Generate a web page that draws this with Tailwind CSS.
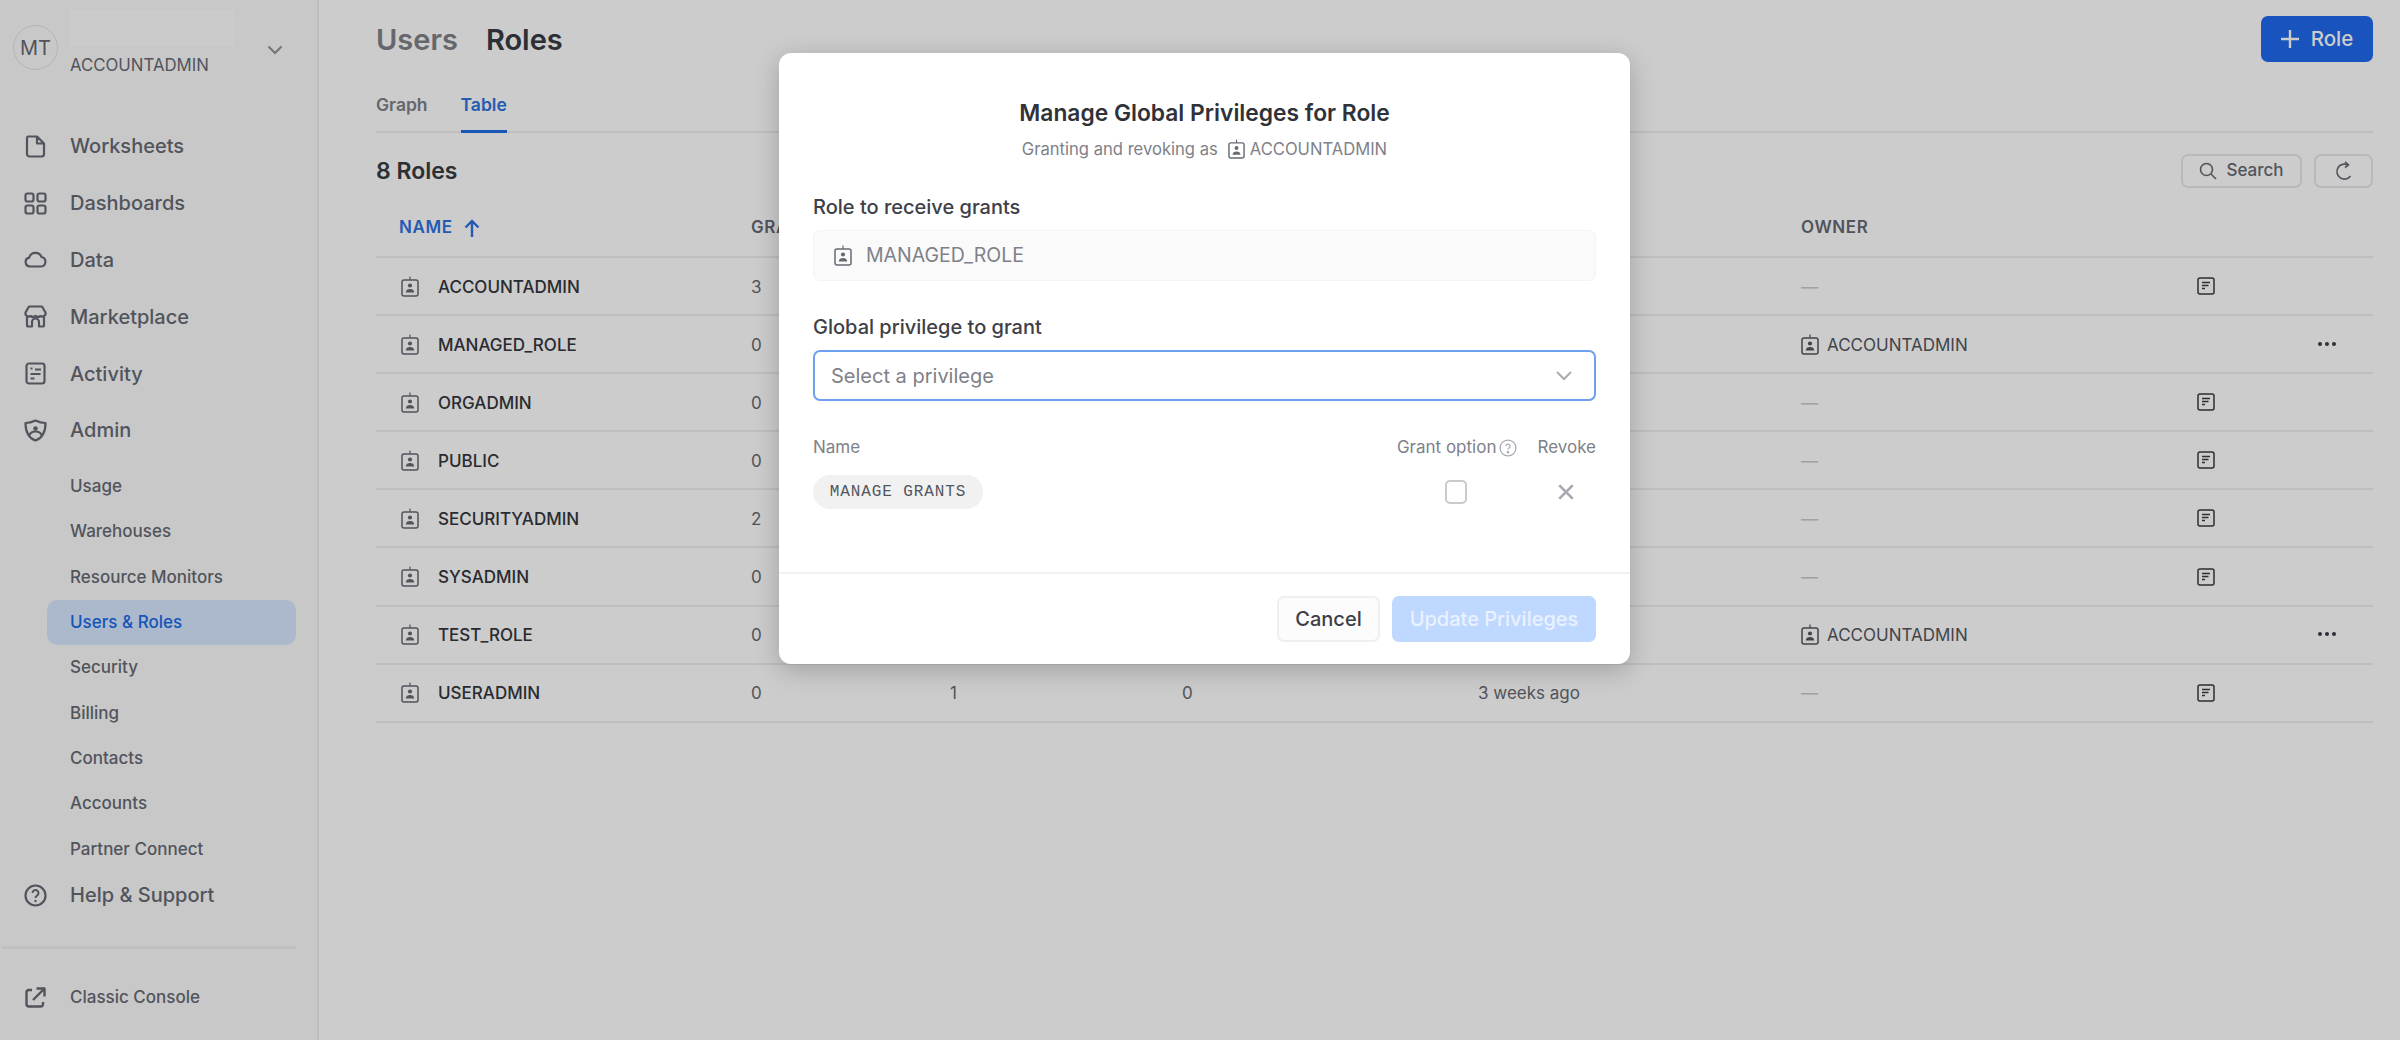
<!DOCTYPE html>
<html lang="en">
<head>
    <meta charset="UTF-8">
    <title>Users &amp; Roles</title>
    <script src="https://cdn.jsdelivr.net/npm/@tailwindcss/browser@4"></script>
</head>
<body class="font-['Inter',sans-serif] antialiased text-[#1e252f]">
    <svg class="hidden">
        <symbol id="role" viewBox="0 0 18 21" fill="none">
            <rect x="1" y="4" width="16" height="16" rx="2" stroke="currentColor" stroke-width="1.5"/>
            <path d="M9 0.5V4" stroke="currentColor" stroke-width="1.2"/>
            <circle cx="9" cy="9.500" r="2.100" fill="currentColor"/>
            <path d="M4.800 16.500c0-2.300 1.900-3.400 4.200-3.400s4.200 1.100 4.200 3.400z" fill="currentColor"/>
        </symbol>
        <symbol id="note" viewBox="0 0 18 18" fill="none">
            <rect x="1" y="1" width="16" height="16" rx="2" stroke="currentColor" stroke-width="1.5"/>
            <path d="M5 5.500h8M5 8.500h6.500M5 11.500h3" stroke="currentColor" stroke-width="1.6"/>
        </symbol>
    </svg>

    <div class="relative w-[2400px] h-[1040px] overflow-hidden bg-white flex">
        <!-- sidebar -->
        <aside class="w-[319px] h-full shrink-0 bg-[#fbfbfb] border-r-2 border-[#eceef0] text-[#666a73] flex flex-col">
            <div class="h-[118px] pl-[13px] flex items-start">
                <div class="mt-[25px] w-[45px] h-[45px] shrink-0 rounded-full border border-[#dfe1e5] flex items-center justify-center text-[20px] text-[#666a73]">MT</div>
                <div class="ml-[12px] w-[165px] shrink-0">
                    <div class="mt-[10px] h-[36px] w-[165px] bg-[#fefefe]"></div>
                    <div class="mt-[9px] text-[16.800px] leading-5 whitespace-nowrap">ACCOUNTADMIN</div>
                </div>
                <svg class="ml-[32px] mt-[44px] w-[16px] h-[12px] shrink-0" viewBox="0 0 16 12" fill="none" stroke="#8d9097" stroke-width="2"><path d="M1.500 2.500 8 9l6.500-6.500"/></svg>
            </div>
            <a class="h-[56.800px] flex items-center pl-[24px] text-[20px] font-medium gap-[23px]">
                <svg class="w-[23px] h-[23px]" viewBox="0 0 23 23" fill="none" stroke="currentColor" stroke-width="2.200" stroke-linejoin="round"><path d="M4 1.500h9l7 7V19a2.500 2.500 0 0 1-2.500 2.500h-12A2.500 2.500 0 0 1 3 19V3a1.500 1.500 0 0 1 1-1.500zM13 1.500V8.500h7"/></svg>Worksheets</a>
            <a class="h-[56.800px] flex items-center pl-[24px] text-[20px] font-medium gap-[23px]">
                <svg class="w-[23px] h-[23px]" viewBox="0 0 23 23" fill="none" stroke="currentColor" stroke-width="2.200"><rect x="1.500" y="1.500" width="8" height="8" rx="2"/><rect x="13.500" y="1.500" width="8" height="8" rx="2"/><rect x="1.500" y="13.500" width="8" height="8" rx="2"/><rect x="13.500" y="13.500" width="8" height="8" rx="2"/></svg>Dashboards</a>
            <a class="h-[56.800px] flex items-center pl-[24px] text-[20px] font-medium gap-[23px]">
                <svg class="w-[23px] h-[23px]" viewBox="0 0 23 23" fill="none" stroke="currentColor" stroke-width="2.200" stroke-linejoin="round"><path d="M6 18.500a4.500 4.500 0 0 1-.8-8.900A6.500 6.500 0 0 1 17.500 9a4.800 4.800 0 0 1-.5 9.500z"/></svg>Data</a>
            <a class="h-[56.800px] flex items-center pl-[24px] text-[20px] font-medium gap-[23px]">
                <svg class="w-[23px] h-[23px]" viewBox="0 0 23 23" fill="none" stroke="currentColor" stroke-width="2.200" stroke-linejoin="round"><path d="M3 11.500V20a1.500 1.500 0 0 0 1.500 1.500H8V17a3.500 3.500 0 0 1 7 0v4.500h3.500A1.500 1.500 0 0 0 20 20v-8.500"/><path d="M5 1.500h13l3.500 6a3.300 3.300 0 0 1-5 3.500 4.200 4.200 0 0 1-5 0 4.200 4.200 0 0 1-5 0 3.300 3.300 0 0 1-5-3.500z"/></svg>Marketplace</a>
            <a class="h-[56.800px] flex items-center pl-[24px] text-[20px] font-medium gap-[23px]">
                <svg class="w-[23px] h-[23px]" viewBox="0 0 23 23" fill="none" stroke="currentColor" stroke-width="2.200"><rect x="2.500" y="1.500" width="18" height="20" rx="2.500"/><path d="M6.500 6.500h2M11 7.500h6M6.500 12h10M6.500 16.500h4" stroke-width="2"/></svg>Activity</a>
            <a class="h-[56.800px] flex items-center pl-[24px] text-[20px] font-medium gap-[23px]">
                <svg class="w-[23px] h-[23px]" viewBox="0 0 23 23" fill="none" stroke="currentColor" stroke-width="2.200" stroke-linejoin="round"><path d="M11.500 1.500c3 1.500 6 2.500 10 2.500 0 8-3 15-10 17.500C4.500 19 1.500 12 1.500 4c4 0 7-1 10-2.500z"/><circle cx="11.500" cy="9.500" r="2.200" fill="currentColor" stroke="none"/><path d="M5.500 16c1-2.500 3-3.500 6-3.500s5 1 6 3.500"/></svg>Admin</a>
            <div class="mt-[5px] flex flex-col text-[17px] font-medium">
                <a class="h-[45.400px] flex items-center pl-[70px]">Usage</a>
                <a class="h-[45.400px] flex items-center pl-[70px]">Warehouses</a>
                <a class="h-[45.400px] flex items-center pl-[70px]">Resource Monitors</a>
                <a class="h-[45.400px] ml-[47px] mr-[21px] flex items-center pl-[23px] rounded-[10px] bg-[#d7e7ff] text-[#1a6ce7]">Users &amp; Roles</a>
                <a class="h-[45.400px] flex items-center pl-[70px]">Security</a>
                <a class="h-[45.400px] flex items-center pl-[70px]">Billing</a>
                <a class="h-[45.400px] flex items-center pl-[70px]">Contacts</a>
                <a class="h-[45.400px] flex items-center pl-[70px]">Accounts</a>
                <a class="h-[45.400px] flex items-center pl-[70px]">Partner Connect</a>
            </div>
            <a class="h-[46px] flex items-center pl-[24px] text-[20px] font-medium gap-[23px]">
                <svg class="w-[23px] h-[23px]" viewBox="0 0 23 23" fill="none" stroke="currentColor" stroke-width="2.200"><circle cx="11.500" cy="11.500" r="10"/><path d="M8.500 9a3 3 0 1 1 4.500 2.600c-1 .6-1.500 1.200-1.500 2.400" stroke-width="2"/><circle cx="11.500" cy="17" r="1.200" fill="currentColor" stroke="none"/></svg>Help &amp; Support</a>
            <div class="mt-[28px] ml-[2px] mr-[21px] h-[3px] bg-[#eff0f2]"></div>
            <a class="mt-[25px] h-[46px] flex items-center pl-[24px] text-[17px] font-medium gap-[23px]">
                <svg class="w-[23px] h-[23px]" viewBox="0 0 23 23" fill="none" stroke="currentColor" stroke-width="2.400" stroke-linejoin="round"><path d="M8 4H5a2.500 2.500 0 0 0-2.500 2.500V18A2.500 2.500 0 0 0 5 20.500h11.500A2.500 2.500 0 0 0 19 18v-2"/><path d="M9 14 20 3M12.500 2.500H20.500V10.500"/></svg>Classic Console</a>
        </aside>

        <!-- main -->
        <main class="flex-1 pl-[57px] pr-[27px] flex flex-col">
            <div class="h-[78px] flex items-start justify-between">
                <div class="mt-[22px] flex gap-[28px] text-[29px] leading-9 font-semibold">
                    <span class="text-[#7e8188]">Users</span>
                    <span class="text-[#383b42]">Roles</span>
                </div>
                <button class="mt-[16px] w-[112px] h-[46px] rounded-[7px] bg-[#1f68ee] text-white text-[20.500px] font-medium flex items-center justify-center gap-[12px]">
                    <svg class="w-[18px] h-[18px]" viewBox="0 0 18 18" stroke="currentColor" stroke-width="2.400"><path d="M9 0v18M0 9h18"/></svg>Role
                </button>
            </div>
            <div class="h-[55px] border-b-2 border-[#eceef0] flex items-start gap-[33px] text-[17.500px] font-semibold">
                <a class="mt-[14px] text-[#7e8188]">Graph</a>
                <a class="h-[55px] pt-[14px] border-b-[3px] border-[#1f6ce6] text-[#2c72e0]">Table</a>
            </div>
            <div class="h-[68px] flex items-center justify-between">
                <h2 class="text-[23px] font-semibold text-[#383b42] mt-[9px]">8 Roles</h2>
                <div class="flex gap-[12px] mt-[7px] text-[#666a73]">
                    <button class="w-[121px] h-[34px] border-2 border-[#e6e8eb] rounded-[7px] flex items-center justify-center gap-[9px] text-[17px] font-medium">
                        <svg class="w-[18px] h-[18px]" viewBox="0 0 18 18" fill="none" stroke="currentColor" stroke-width="1.600"><circle cx="7.500" cy="7.500" r="6"/><path d="m12 12 5 5"/></svg>Search
                    </button>
                    <button class="w-[59px] h-[34px] border-2 border-[#e6e8eb] rounded-[7px] flex items-center justify-center">
                        <svg class="w-[18px] h-[20px]" viewBox="0 0 18 20" fill="none" stroke="currentColor" stroke-width="1.600"><path d="M15.500 15a7.500 7.500 0 1 1-2.500-11"/><path d="M10 .8 13.500 4 10 6.500"/></svg>
                    </button>
                </div>
            </div>

            <!-- table -->
            <div class="flex flex-col text-[17px] text-[#666a73]">
                <div class="grid grid-cols-[375px_199px_232px_296px_323px_396px_120px_1fr] h-[57px] items-center border-b-2 border-[#eceef0] text-[17px] font-semibold tracking-[0.6px] pb-[2px]">
                    <span class="pl-[23px] text-[#2c72e0] flex items-center gap-[11px]">NAME <svg class="w-[16px] h-[18px]" viewBox="0 0 16 18" fill="none" stroke="currentColor" stroke-width="2.400"><path d="M8 18V2M1.500 8.500 8 2l6.500 6.500"/></svg></span>
                    <span>GRANTED</span><span></span><span></span><span></span><span>OWNER</span>
                </div>

                <div class="grid grid-cols-[375px_199px_232px_296px_323px_396px_120px_1fr] h-[58.100px] pt-[3px] items-center border-b-2 border-[#eceef0]">
                    <span class="pl-[25px] flex items-center gap-[19px] font-medium text-[#33363d]"><svg class="-mt-[3px] w-[18px] h-[21px] text-[#666a73]"><use href="#role"/></svg>ACCOUNTADMIN</span>
                    <span>3</span><span></span><span></span><span></span><span class="text-[#c8cacd]">—</span>
                    <svg class="-mt-[3px] w-[18px] h-[18px] text-[#383b42]"><use href="#note"/></svg>
                </div>
                <div class="grid grid-cols-[375px_199px_232px_296px_323px_396px_120px_1fr] h-[58.100px] pt-[3px] items-center border-b-2 border-[#eceef0]">
                    <span class="pl-[25px] flex items-center gap-[19px] font-medium text-[#33363d]"><svg class="-mt-[3px] w-[18px] h-[21px] text-[#666a73]"><use href="#role"/></svg>MANAGED_ROLE</span>
                    <span>0</span><span></span><span></span><span></span>
                    <span class="flex items-center gap-[8px] text-[#53565d]"><svg class="-mt-[3px] w-[18px] h-[21px] text-[#53565d]"><use href="#role"/></svg>ACCOUNTADMIN</span>
                    <span></span>
                    <svg class="w-[20px] h-[6px] text-[#383b42] -mt-[4px]" viewBox="0 0 20 6" fill="currentColor"><circle cx="3" cy="3" r="2"/><circle cx="10" cy="3" r="2"/><circle cx="17" cy="3" r="2"/></svg>
                </div>
                <div class="grid grid-cols-[375px_199px_232px_296px_323px_396px_120px_1fr] h-[58.100px] pt-[3px] items-center border-b-2 border-[#eceef0]">
                    <span class="pl-[25px] flex items-center gap-[19px] font-medium text-[#33363d]"><svg class="-mt-[3px] w-[18px] h-[21px] text-[#666a73]"><use href="#role"/></svg>ORGADMIN</span>
                    <span>0</span><span></span><span></span><span></span><span class="text-[#c8cacd]">—</span>
                    <svg class="-mt-[3px] w-[18px] h-[18px] text-[#383b42]"><use href="#note"/></svg>
                </div>
                <div class="grid grid-cols-[375px_199px_232px_296px_323px_396px_120px_1fr] h-[58.100px] pt-[3px] items-center border-b-2 border-[#eceef0]">
                    <span class="pl-[25px] flex items-center gap-[19px] font-medium text-[#33363d]"><svg class="-mt-[3px] w-[18px] h-[21px] text-[#666a73]"><use href="#role"/></svg>PUBLIC</span>
                    <span>0</span><span></span><span></span><span></span><span class="text-[#c8cacd]">—</span>
                    <svg class="-mt-[3px] w-[18px] h-[18px] text-[#383b42]"><use href="#note"/></svg>
                </div>
                <div class="grid grid-cols-[375px_199px_232px_296px_323px_396px_120px_1fr] h-[58.100px] pt-[3px] items-center border-b-2 border-[#eceef0]">
                    <span class="pl-[25px] flex items-center gap-[19px] font-medium text-[#33363d]"><svg class="-mt-[3px] w-[18px] h-[21px] text-[#666a73]"><use href="#role"/></svg>SECURITYADMIN</span>
                    <span>2</span><span></span><span></span><span></span><span class="text-[#c8cacd]">—</span>
                    <svg class="-mt-[3px] w-[18px] h-[18px] text-[#383b42]"><use href="#note"/></svg>
                </div>
                <div class="grid grid-cols-[375px_199px_232px_296px_323px_396px_120px_1fr] h-[58.100px] pt-[3px] items-center border-b-2 border-[#eceef0]">
                    <span class="pl-[25px] flex items-center gap-[19px] font-medium text-[#33363d]"><svg class="-mt-[3px] w-[18px] h-[21px] text-[#666a73]"><use href="#role"/></svg>SYSADMIN</span>
                    <span>0</span><span></span><span></span><span></span><span class="text-[#c8cacd]">—</span>
                    <svg class="-mt-[3px] w-[18px] h-[18px] text-[#383b42]"><use href="#note"/></svg>
                </div>
                <div class="grid grid-cols-[375px_199px_232px_296px_323px_396px_120px_1fr] h-[58.100px] pt-[3px] items-center border-b-2 border-[#eceef0]">
                    <span class="pl-[25px] flex items-center gap-[19px] font-medium text-[#33363d]"><svg class="-mt-[3px] w-[18px] h-[21px] text-[#666a73]"><use href="#role"/></svg>TEST_ROLE</span>
                    <span>0</span><span></span><span></span><span></span>
                    <span class="flex items-center gap-[8px] text-[#53565d]"><svg class="-mt-[3px] w-[18px] h-[21px] text-[#53565d]"><use href="#role"/></svg>ACCOUNTADMIN</span>
                    <span></span>
                    <svg class="w-[20px] h-[6px] text-[#383b42] -mt-[4px]" viewBox="0 0 20 6" fill="currentColor"><circle cx="3" cy="3" r="2"/><circle cx="10" cy="3" r="2"/><circle cx="17" cy="3" r="2"/></svg>
                </div>
                <div class="grid grid-cols-[375px_199px_232px_296px_323px_396px_120px_1fr] h-[58.100px] pt-[3px] items-center border-b-2 border-[#eceef0]">
                    <span class="pl-[25px] flex items-center gap-[19px] font-medium text-[#33363d]"><svg class="-mt-[3px] w-[18px] h-[21px] text-[#666a73]"><use href="#role"/></svg>USERADMIN</span>
                    <span>0</span><span>1</span><span>0</span><span>3 weeks ago</span><span class="text-[#c8cacd]">—</span>
                    <svg class="-mt-[3px] w-[18px] h-[18px] text-[#383b42]"><use href="#note"/></svg>
                </div>
            </div>
        </main>

        <!-- dialog backdrop -->
        <div class="absolute inset-0 bg-black/20"></div>

        <!-- dialog -->
        <div class="absolute left-[779px] top-[53px] w-[851px] h-[611px] bg-white rounded-[12px] shadow-[0_6px_26px_rgba(0,0,0,0.22)] flex flex-col">
            <div class="pt-[46px] flex flex-col items-center">
                <h1 class="text-[22.800px] leading-7 font-semibold text-[#2f3238]">Manage Global Privileges for Role</h1>
                <p class="mt-[12px] h-[20px] flex items-center text-[16.600px] text-[#7e8188]">Granting and revoking as
                    <svg class="ml-[10px] mr-[5px] w-[17px] h-[20px] text-[#666a73]"><use href="#role"/></svg>ACCOUNTADMIN</p>
            </div>
            <div class="px-[34px]">
                <label class="mt-[36px] block text-[20px] leading-6 font-medium text-[#3d4047]">Role to receive grants</label>
                <div class="mt-[11px] h-[51px] rounded-[7px] bg-[#fafafa] border border-[#f3f4f5] flex items-center pl-[20px] gap-[14px] text-[19.500px] text-[#7e8188]">
                    <svg class="w-[18px] h-[21px] text-[#666a73]"><use href="#role"/></svg>MANAGED_ROLE
                </div>
                <label class="mt-[34px] block text-[20px] leading-6 font-medium text-[#3d4047]">Global privilege to grant</label>
                <div class="mt-[11px] h-[51px] rounded-[7px] border-2 border-[#6f9ff0] flex items-center justify-between pl-[16px] pr-[22px] text-[20px] text-[#7e8188]">
                    Select a privilege
                    <svg class="w-[16px] h-[10px]" viewBox="0 0 16 10" fill="none" stroke="#a8abb1" stroke-width="2"><path d="m1 1 7 7 7-7"/></svg>
                </div>
                <div class="mt-[37px] h-[20px] flex items-center text-[17px] text-[#7e8188]">
                    <span>Name</span>
                    <span class="ml-auto">Grant option</span>
                    <svg class="ml-[3px] w-[18px] h-[18px]" viewBox="0 0 17 17" fill="none" stroke="#a8abb1" stroke-width="1.200"><circle cx="8.500" cy="8.500" r="7.500"/><path d="M6.500 6.800a2 2 0 1 1 3 1.700c-.7.400-1 .8-1 1.500"/><circle cx="8.500" cy="12.500" r=".6" fill="#a8abb1"/></svg>
                    <span class="ml-[20px]">Revoke</span>
                </div>
                <div class="mt-[17px] h-[34px] flex items-center">
                    <span class="h-[34px] w-[170px] shrink-0 rounded-full bg-[#f1f1f1] flex items-center justify-center font-['Liberation_Mono',monospace] text-[16px] tracking-[0.900px] text-[#53565d] whitespace-nowrap">MANAGE GRANTS</span>
                    <span class="ml-[462px] w-[22px] h-[24px] shrink-0 rounded-[5px] border-2 border-[#c8cacd]"></span>
                    <svg class="ml-[90px] w-[18px] h-[18px] shrink-0" viewBox="0 0 16 16" fill="none" stroke="#a8abb1" stroke-width="2.200"><path d="m2 2 12 12M14 2 2 14"/></svg>
                </div>
            </div>
            <div class="mt-[63px] h-[2px] bg-[#f0f1f2]"></div>
            <div class="mt-[22px] px-[34px] flex justify-end gap-[12px]">
                <button class="w-[103px] h-[46px] rounded-[7px] border-2 border-[#eeeff1] bg-[#fcfcfc] text-[20px] font-medium text-[#3d4047]">Cancel</button>
                <button class="w-[204px] h-[46px] rounded-[7px] bg-[#bfd8ff] text-[20px] font-medium text-[#eaf2ff]">Update Privileges</button>
            </div>
        </div>
    </div>
</body>
</html>
